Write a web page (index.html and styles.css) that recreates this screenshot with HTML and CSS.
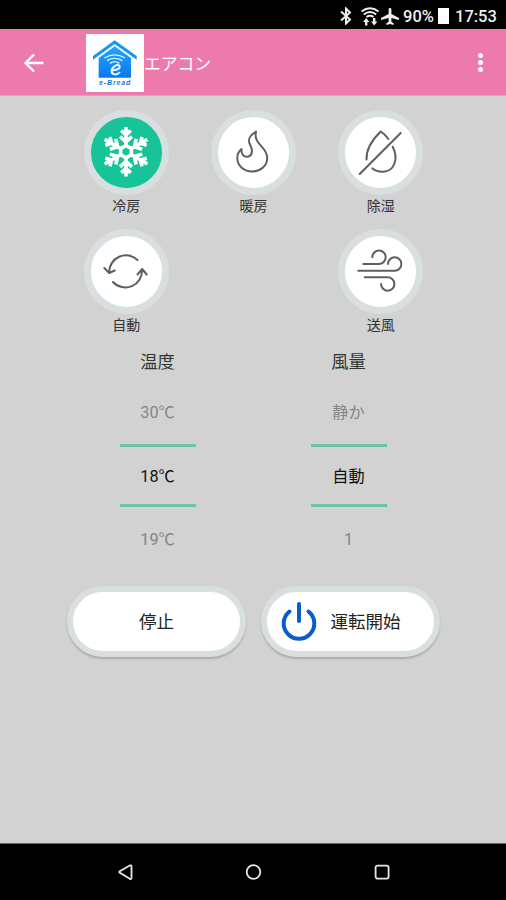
FILE: index.html
```html
<!DOCTYPE html>
<html lang="ja">
<head>
  <meta charset="UTF-8" />
  <meta name="viewport" content="width=device-width, initial-scale=1.0" />
  <title>エアコン</title>
  <link rel="stylesheet" href="styles.css">
</head>
<body>
  <div class="status">
    <svg class="bluetooth" width="12" height="18" viewBox="0 0 12 18">
      <path d="M1 4.5L10 12.5L6 16.5V1.5L10 5.5L1 13.5" fill="none" stroke="#eee" stroke-width="2"/>
    </svg>
    <svg class="wifi" width="20" height="19" viewBox="0 0 20 19">
      <path d="M1.5 4.5Q10-2 18.5 4.5M3.8 7.5Q10 2.5 16.2 7.5M6.5 10Q10 7.5 13.5 10" fill="none" stroke="#eee" stroke-width="2"/>
      <path d="M3 15l3.200-4 3.200 4H7.400v3.500H5V15zM11 14.500h2V11h2.400v3.500h2l-3.200 4z" fill="#eee"/>
    </svg>
    <svg class="plane" width="18" height="18" viewBox="0 0 18 18">
      <path d="M7.600 7V2.400a1.400 1.400 0 0 1 2.800 0V7L18 11v2l-7.600-2v3.700l2.200 1.600V18L9 17l-3.600 1v-1.700l2.200-1.600V11L0 13v-2z" fill="#eee"/>
    </svg>
    <span class="percent">90%</span>
    <span class="battery"></span>
    <span class="clock">17:53</span>
  </div>

  <header class="topbar">
    <svg class="back" width="22" height="20" viewBox="0 0 22 20">
      <path d="M20.500 10H3M11 1.500L2.500 10l8.500 8.500" fill="none" stroke="#fff" stroke-width="2.400"/>
    </svg>
    <svg class="logo" width="58" height="58" viewBox="0 0 174 174">
      <defs>
        <linearGradient id="azul" x1="0" y1="0" x2="0" y2="1">
          <stop offset="0" stop-color="#24a4ff"/>
          <stop offset="1" stop-color="#0879f2"/>
        </linearGradient>
      </defs>
      <rect width="174" height="174" fill="#fff"/>
      <path d="M38 72L86 37l49 35v59H38z" fill="url(#azul)"/>
      <path d="M21 66L86 19l66 47v11L86 30 21 77z" fill="#1496f6"/>
      <path d="M55 72Q86 53 117 72M63 80Q86 66 109 80M72 88Q86 78 100 88" fill="none" stroke="#d9f1ff" stroke-width="4"/>
      <path d="M76 108C94 111 105 101 100 95C94 89 77 99 77 111C77 125 95 123 102 114" fill="none" stroke="#e8f6ff" stroke-width="6"/>
      <text x="86" y="154" class="logo-text" textLength="94">e-Bread</text>
    </svg>
    <h1>エアコン</h1>
    <div class="menu"><i></i><i></i><i></i></div>
  </header>

  <main>
    <div class="modes">
      <div class="mode">
        <div class="circle active">
          <svg viewBox="0 0 71 71">
            <defs>
              <g id="braco">
                <path d="M35 29V10M30.300 13.500l4.700 4.500 4.700-4.500M29 19.500l6 5.500 6-5.500"/>
              </g>
            </defs>
            <g class="snow">
              <path d="M35 28.500l5.400 3.100v6.200L35 40.900l-5.400-3.100v-6.200z"/>
              <use href="#braco"/>
              <use href="#braco" transform="rotate(60 35 34.700)"/>
              <use href="#braco" transform="rotate(120 35 34.700)"/>
              <use href="#braco" transform="rotate(180 35 34.700)"/>
              <use href="#braco" transform="rotate(240 35 34.700)"/>
              <use href="#braco" transform="rotate(300 35 34.700)"/>
            </g>
          </svg>
        </div>
        <span>冷房</span>
      </div>
      <div class="mode">
        <div class="circle">
          <svg viewBox="0 0 71 71">
            <path class="line" d="M38 14.500C32 18 29.500 23 32 27.500C35 33 34.500 38.500 30.500 39.500C26 40.500 23 37.500 23.500 32C20.500 34.500 19.300 38 19.300 41C19.500 49 26 54.500 34.300 54.500C43 54.500 49.200 48.500 49.200 41C49.200 29 35 28 38 14.500z"/>
          </svg>
        </div>
        <span>暖房</span>
      </div>
      <div class="mode">
        <div class="circle">
          <svg viewBox="0 0 71 71">
            <path class="line" d="M43.300 22Q40 17 35.700 14.500C29 21 21 31 21.500 42.500M47.700 29.700C54 42 49 54.500 38 54.800Q31.500 55 27.300 51.300M55.700 16L14.700 57"/>
          </svg>
        </div>
        <span>除湿</span>
      </div>
      <div class="mode">
        <div class="circle">
          <svg viewBox="0 0 71 71">
            <path class="line" d="M46.500 24A16.700 16.700 0 0 0 18.200 36.500M13.300 32l4.900 5 5.500-2.500M22 46A16.700 16.700 0 0 0 51 33.500M46.500 38.500l4.700-5.500 4.500 5.500"/>
          </svg>
        </div>
        <span>自動</span>
      </div>
      <div class="mode last">
        <div class="circle">
          <svg viewBox="0 0 71 71">
            <path class="line" d="M18.300 28H34a6.700 6.700 0 1 0-6.700-6.700M13.300 34.700H49.700A6.700 6.700 0 1 0 43 28M19.700 41.300H42.300A6.700 6.700 0 1 1 36 48"/>
          </svg>
        </div>
        <span>送風</span>
      </div>
    </div>

    <div class="pickers">
      <div class="picker">
        <h2>温度</h2>
        <div class="value">30℃</div>
        <div class="value selected">18℃</div>
        <div class="value">19℃</div>
      </div>
      <div class="picker">
        <h2>風量</h2>
        <div class="value">静か</div>
        <div class="value selected">自動</div>
        <div class="value">1</div>
      </div>
    </div>

    <div class="buttons">
      <button class="btn">停止</button>
      <button class="btn">
        <svg class="power" width="36" height="40" viewBox="0 0 36 40">
          <path d="M8.500 10.500A15.300 15.300 0 1 0 27.500 10.500M18 3V20" fill="none" stroke="#0b5cc8" stroke-width="4" stroke-linecap="round"/>
        </svg>
        運転開始
      </button>
    </div>
  </main>

  <nav class="navbar">
    <svg width="18" height="18" viewBox="0 0 18 18"><path d="M3.500 9.500Q3 9 3.500 8.500L13.700 2.500Q15.500 1.800 15.500 3.500V15Q15.500 16.500 13.700 15.800z"/></svg>
    <svg width="18" height="18" viewBox="0 0 18 18"><circle cx="8.500" cy="9" r="6.800"/></svg>
    <svg width="18" height="18" viewBox="0 0 18 18"><rect x="2.600" y="2.600" width="13" height="13" rx="2"/></svg>
  </nav>
</body>
</html>
```

FILE: styles.css
```css
* {
  box-sizing: border-box;
}

body {
  font-family: Roboto, "Noto Sans CJK JP", sans-serif;
  background-color: #d2d2d2;
  color: #333;
  margin: 0;
  height: 900px;
  display: flex;
  flex-direction: column;
  overflow: hidden;
}

.status {
  background-color: #000;
  color: #eee;
  height: 29px;
  padding: 3px 9px 0 0;
  display: flex;
  justify-content: flex-end;
  align-items: center;
  font-size: 16.5px;
  font-weight: 500;
}

.bluetooth {
  margin-right: 8px;
}

.wifi {
  margin-right: 1px;
}

.plane {
  margin-right: 4px;
}

.percent {
  width: 32px;
  font-size: 16.5px;
}

.battery {
  width: 11px;
  height: 16px;
  background-color: #fff;
  margin: 0 6px 0 3px;
}

.clock {
  width: 42px;
}

.topbar {
  background-color: #ec7aac;
  height: 67px;
  border-bottom: 1px solid #e3a3bf;
  display: flex;
  align-items: center;
  padding: 1px 20px 0 23px;
}

.logo {
  margin-left: 41px;
}

.logo-text {
  font-family: "Liberation Sans", Arial, sans-serif;
  font-size: 21px;
  font-weight: bold;
  font-style: italic;
  text-anchor: middle;
  fill: #2377dd;
}

.topbar h1 {
  flex: 1;
  margin: 0;
  font-size: 16.8px;
  font-weight: 400;
  color: #fff;
}

.menu {
  display: flex;
  flex-direction: column;
  gap: 2px;
  width: 11px;
  align-items: center;
}

.menu i {
  width: 5px;
  height: 5px;
  border-radius: 50%;
  background-color: #fff;
}

main {
  flex: 1;
  width: 382px;
  margin-left: 62px;
  padding-top: 14px;
}

.modes {
  display: grid;
  grid-template-columns: repeat(3, 1fr);
  grid-auto-rows: 119px;
  margin: 0 -0.5px 1px 0.5px;
}

.mode {
  display: flex;
  flex-direction: column;
  align-items: center;
  font-size: 14px;
  line-height: 20px;
}

.mode span {
  margin-top: 1px;
}

.mode.last {
  grid-column: 3;
}

.circle {
  width: 85px;
  height: 85px;
  border: 7px solid #d9dfdf;
  border-radius: 50%;
  background-color: #fff;
}

.circle.active {
  background-color: #17c499;
}

.circle svg {
  display: block;
  width: 71px;
  height: 71px;
}

.line {
  fill: none;
  stroke: #5b6062;
  stroke-width: 2;
  stroke-linecap: round;
  stroke-linejoin: round;
}

.snow {
  fill: none;
  stroke: #fff;
  stroke-width: 3.6;
}

.pickers {
  display: grid;
  grid-template-columns: 1fr 1fr;
}

.picker {
  display: flex;
  flex-direction: column;
  align-items: center;
}

.picker h2 {
  margin: 0;
  font-size: 17.3px;
  font-weight: 400;
  line-height: 26px;
  height: 32px;
}

.value {
  width: 76px;
  height: 63px;
  line-height: 64px;
  text-align: center;
  font-size: 16.2px;
  color: #858585;
}

.value.selected {
  border-top: 3px solid #6dc3a6;
  border-bottom: 3px solid #6dc3a6;
  line-height: 59px;
  color: #111;
}

.value.selected + .value {
  line-height: 66px;
}

.buttons {
  display: flex;
  gap: 15px;
  margin: 16px 4px 0 5px;
}

.btn {
  flex: none;
  width: 179px;
  height: 71px;
  border: 6.5px solid #d9dfdf;
  border-radius: 36px;
  background-color: #fff;
  box-shadow: 0 2px 2px #aaa;
  display: flex;
  align-items: center;
  justify-content: center;
  gap: 14px;
  padding: 0 0 2px;
  font-family: inherit;
  font-size: 17.5px;
  color: #222;
}

.power {
  margin-left: -20px;
}

.navbar {
  background-color: #000;
  height: 57px;
  border-top: 1px solid #666;
  display: flex;
  justify-content: space-between;
  align-items: center;
  padding: 0 115px 0 116px;
}

.navbar svg {
  fill: none;
  stroke: #e8e8e8;
  stroke-width: 1.8;
}
```
